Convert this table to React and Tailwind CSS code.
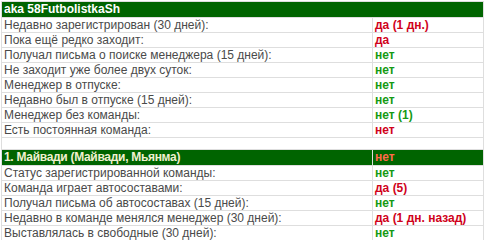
const managerRows = [
  ["Недавно зарегистрирован (30 дней):", "да (1 дн.)", "red"],
  ["Пока ещё редко заходит:", "да", "red"],
  ["Получал письма о поиске менеджера (15 дней):", "нет", "green"],
  ["Не заходит уже более двух суток:", "нет", "green"],
  ["Менеджер в отпуске:", "нет", "green"],
  ["Недавно был в отпуске (15 дней):", "нет", "green"],
  ["Менеджер без команды:", "нет (1)", "green"],
  ["Есть постоянная команда:", "нет", "red"],
];

const teamRows = [
  ["Статус зарегистрированной команды:", "нет", "green"],
  ["Команда играет автосоставами:", "да (5)", "red"],
  ["Получал письма об автосоставах (15 дней):", "нет", "green"],
  ["Недавно в команде менялся менеджер (30 дней):", "да (1 дн. назад)", "red"],
  ["Выставлялась в свободные (30 дней):", "нет", "green"],
];

function Row({ label, value, tone }) {
  return (
    <tr>
      <td className="bg-white h-[14px] px-[2px] py-0 leading-[14px] text-[#4a4a4a]">{label}</td>
      <td
        className={`bg-white h-[14px] px-[2px] py-0 leading-[14px] font-bold ${
          tone === "red" ? "text-[#d0021b]" : "text-[#159a15]"
        }`}
      >
        {value}
      </td>
    </tr>
  );
}

export default function App() {
  return (
    <div className="bg-white w-[485px] h-[240px] pt-px pl-px font-['Liberation_Sans',Arial,sans-serif] text-[12px]">
      <table className="w-[483px] bg-[#dedede] border-separate border-spacing-[1px]">
        <colgroup>
          <col className="w-[370px]" />
          <col />
        </colgroup>
        <tbody>
          <tr>
            <td colSpan={2} className="bg-[#006400] text-white font-bold h-[15px] px-[2px] leading-[15px]">
              aka 58FutbolistkaSh
            </td>
          </tr>
          {managerRows.map(([l, v, t]) => (
            <Row key={l} label={l} value={v} tone={t} />
          ))}
          <tr>
            <td colSpan={2} className="bg-white h-[11px] p-0"></td>
          </tr>
          <tr>
            <td className="bg-[#006400] text-[#f0f0d0] font-bold h-[15px] px-[2px] leading-[15px] tracking-[-0.3px]">
              1. Майвади (Майвади, Мьянма)
            </td>
            <td className="bg-[#006400] text-[#ff6a4a] font-bold h-[15px] px-[2px] leading-[15px]">нет</td>
          </tr>
          {teamRows.map(([l, v, t]) => (
            <Row key={l} label={l} value={v} tone={t} />
          ))}
        </tbody>
      </table>
    </div>
  );
}
